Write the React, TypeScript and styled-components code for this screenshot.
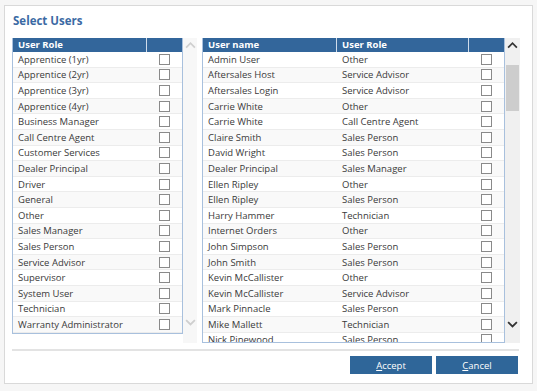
import React from "react";
import styled, { createGlobalStyle } from "styled-components";

const Global = createGlobalStyle`
  html, body { margin: 0; padding: 0; background: #f6f6f6; }
  body { font-family: "Open Sans", "DejaVu Sans", sans-serif; color: #333; }
  * { box-sizing: border-box; }
`;

const Panel = styled.div`
  margin: 5px 0 0 4px;
  width: 529px;
  height: 379px;
  background: #fff;
  border: 1px solid #d9d9d9;
  padding: 7px 13px 0 7px;
  display: flex;
  flex-direction: column;
`;

const Title = styled.div`
  font-size: 11.5px;
  font-weight: 700;
  color: #3b6aa4;
  height: 25px;
  line-height: 16px;
  padding-left: 1px;
`;

const Lists = styled.div`
  display: flex;
  align-items: flex-start;
  height: 305px;
`;

const Table = styled.div<{ $w: number; $h: number }>`
  width: ${(p) => p.$w}px;
  height: ${(p) => p.$h}px;
  border: 1px solid #a8c0dd;
  border-top: none;
  overflow: hidden;
  flex: none;
`;

const Row = styled.div<{ $cols: string; $alt?: boolean }>`
  display: grid;
  grid-template-columns: ${(p) => p.$cols};
  height: 15.6px;
  align-items: center;
  background: ${(p) => (p.$alt ? "#f9f9f9" : "#fff")};
  border-bottom: 1px solid #ececec;
`;

const HeadRow = styled.div<{ $cols: string }>`
  display: grid;
  grid-template-columns: ${(p) => p.$cols};
  height: 14px;
  background: #33669b;
`;

const HeadCell = styled.div`
  color: #fff;
  font-weight: 700;
  font-size: 9.5px;
  line-height: 14px;
  padding-left: 5px;
  border-right: 1px solid #cfdceb;
  &:last-child { border-right: none; }
`;

const Cell = styled.div`
  font-size: 9.5px;
  line-height: 15px;
  padding-left: 5px;
  white-space: nowrap;
  overflow: hidden;
  color: #3a3a3a;
`;

const BoxCell = styled.div`
  display: flex;
  justify-content: center;
  align-items: center;
`;

const Box = styled.span`
  width: 11px;
  height: 11px;
  border: 1px solid #8a8a8a;
  background: #fff;
`;

const Gutter = styled.div<{ $dark?: boolean }>`
  width: ${(p) => (p.$dark ? 15 : 14)}px;
  height: 305px;
  background: ${(p) => (p.$dark ? "#f0f0f0" : "#f7f7f7")};
  display: flex;
  flex-direction: column;
  align-items: center;
  padding: 3px 0;
  flex: none;
`;

const GutterGap = styled.div<{ $w: number }>`
  width: ${(p) => p.$w}px;
  flex: none;
`;

const Thumb = styled.div`
  width: 13px;
  height: 46px;
  background: #cdcdcd;
  margin-top: 16px;
`;

const Spacer = styled.div`
  flex: 1;
`;

const BottomPad = styled.div<{ $h: number }>`
  height: ${(p) => p.$h}px;
`;

const Separator = styled.div`
  margin-top: 6px;
  height: 2px;
  background: #e3e3e3;
`;

const Buttons = styled.div`
  display: flex;
  justify-content: flex-end;
  gap: 4px;
  margin-top: 5px;
  padding-right: 1px;
`;

const Button = styled.button`
  width: 82px;
  height: 18px;
  border: none;
  background: #2f6699;
  color: #fff;
  font-family: "Open Sans", "DejaVu Sans", sans-serif;
  font-size: 9.5px;
  padding: 0;
  u { text-decoration: underline; }
`;

const Chevron = ({ up, color, size }: { up?: boolean; color: string; size: number }) => (
  <svg width={size} height={size * 0.7} viewBox="0 0 10 7">
    <polyline
      points={up ? "1,6 5,2 9,6" : "1,1 5,5 9,1"}
      fill="none"
      stroke={color}
      strokeWidth={1.6}
    />
  </svg>
);

const roles = [
  "Apprentice (1yr)",
  "Apprentice (2yr)",
  "Apprentice (3yr)",
  "Apprentice (4yr)",
  "Business Manager",
  "Call Centre Agent",
  "Customer Services",
  "Dealer Principal",
  "Driver",
  "General",
  "Other",
  "Sales Manager",
  "Sales Person",
  "Service Advisor",
  "Supervisor",
  "System User",
  "Technician",
  "Warranty Administrator",
];

const users: [string, string][] = [
  ["Admin User", "Other"],
  ["Aftersales Host", "Service Advisor"],
  ["Aftersales Login", "Service Advisor"],
  ["Carrie White", "Other"],
  ["Carrie White", "Call Centre Agent"],
  ["Claire Smith", "Sales Person"],
  ["David Wright", "Sales Person"],
  ["Dealer Principal", "Sales Manager"],
  ["Ellen Ripley", "Other"],
  ["Ellen Ripley", "Sales Person"],
  ["Harry Hammer", "Technician"],
  ["Internet Orders", "Other"],
  ["John Simpson", "Sales Person"],
  ["John Smith", "Sales Person"],
  ["Kevin McCallister", "Other"],
  ["Kevin McCallister", "Service Advisor"],
  ["Mark Pinnacle", "Sales Person"],
  ["Mike Mallett", "Technician"],
  ["Nick Pinewood", "Sales Person"],
];

const LEFT_COLS = "134px 1fr";
const RIGHT_COLS = "134px 132px 1fr";

export default function App() {
  return (
    <>
      <Global />
      <Panel>
        <Title>Select Users</Title>
        <Lists>
          <Table $w={171} $h={296}>
            <HeadRow $cols={LEFT_COLS}>
              <HeadCell>User Role</HeadCell>
              <HeadCell />
            </HeadRow>
            {roles.map((r, i) => (
              <Row key={r} $cols={LEFT_COLS} $alt={i % 2 === 1}>
                <Cell>{r}</Cell>
                <BoxCell>
                  <Box />
                </BoxCell>
              </Row>
            ))}
          </Table>
          <Gutter>
            <Chevron up color="#cfcfcf" size={11} />
            <Spacer />
            <Chevron color="#cfcfcf" size={11} />
            <BottomPad $h={13} />
          </Gutter>
          <GutterGap $w={5} />
          <Table $w={303} $h={305}>
            <HeadRow $cols={RIGHT_COLS}>
              <HeadCell>User name</HeadCell>
              <HeadCell>User Role</HeadCell>
              <HeadCell />
            </HeadRow>
            {users.map(([n, r], i) => (
              <Row key={i} $cols={RIGHT_COLS} $alt={i % 2 === 1}>
                <Cell>{n}</Cell>
                <Cell>{r}</Cell>
                <BoxCell>
                  <Box />
                </BoxCell>
              </Row>
            ))}
          </Table>
          <Gutter $dark>
            <Chevron up color="#333" size={11} />
            <Thumb />
            <Spacer />
            <Chevron color="#333" size={11} />
            <BottomPad $h={11} />
          </Gutter>
        </Lists>
        <Separator />
        <Buttons>
          <Button>
            <u>A</u>ccept
          </Button>
          <Button>
            <u>C</u>ancel
          </Button>
        </Buttons>
      </Panel>
    </>
  );
}
